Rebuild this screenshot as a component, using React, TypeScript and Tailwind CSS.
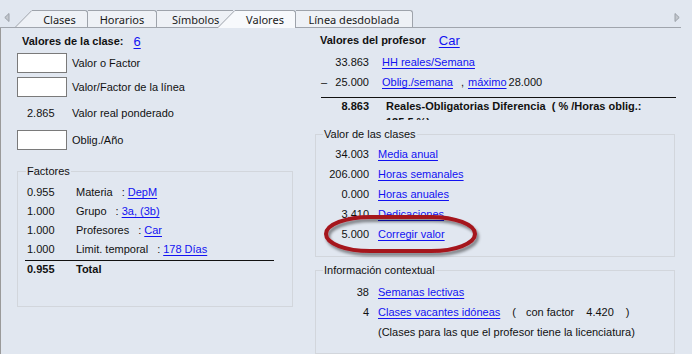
import React from 'react'

const link = 'text-[#1212f2] underline decoration-1 underline-offset-[2px]'

function Box() {
  return <div className="h-[20px] w-[50px] shrink-0 border border-[#7a7a7a] bg-white" />
}

function Slant({ fill, active }: { fill: string; active?: boolean }) {
  return (
    <svg
      width="17"
      height={active ? 18 : 17}
      viewBox={active ? '0 0 17 18' : '0 0 17 17'}
      className={active ? 'relative z-10 -mb-px -ml-[15px] block shrink-0' : 'block shrink-0'}
    >
      <path d={active ? 'M0 18 L17 0 L17 18 Z' : 'M0 17 L17 0 L17 17 Z'} fill={fill} />
      <path d="M0.5 17 L16.8 0.5" stroke="#9ea3ab" strokeWidth="1" fill="none" />
    </svg>
  )
}

function FactorRow({ value, label, target }: { value: string; label: string; target: string }) {
  return (
    <div className="flex h-[19px] items-center">
      <span className="w-[49px]">{value}</span>
      <span>{label}</span>
      <span className="ml-[9px]">:</span>
      <span className={`ml-[3px] ${link}`}>{target}</span>
    </div>
  )
}

function ValueRow({ value, children }: { value: string; children: React.ReactNode }) {
  return (
    <div className="flex h-[20px] items-center">
      <span className="w-[53px] text-right">{value}</span>
      <span className="ml-[9px] flex items-center whitespace-pre">{children}</span>
    </div>
  )
}

export default function App() {
  return (
    <div className="relative h-[354px] w-[692px] overflow-hidden bg-[#e1e7f0] font-['Liberation_Sans',Arial,sans-serif] text-[11px] leading-[13px] text-[#111]">
      {/* tab strip */}
      <div className="flex h-[28px] w-[681px] items-end border-b border-[#a0a5ad] font-['Noto_Sans',sans-serif] text-[11px] text-[#1a1a1a]">
        <svg width="6" height="9" viewBox="0 0 6 9" className="mb-[6px] ml-[4px] self-start mt-[13px] block shrink-0">
          <path d="M5 0.5 L0.8 4.5 L5 8.5 Z" fill="#c3c7cd" stroke="#9aa0a8" strokeWidth="1" />
        </svg>
        <div className="ml-[5px] flex items-end">
          <Slant fill="#eef1f6" />
          <div className="flex h-[17px] w-[56px] items-center justify-center rounded-tr-[3px] border-t border-r border-[#9ea3ab] bg-[#eef1f6]">
            Clases
          </div>
          <div className="flex h-[17px] w-[69px] items-center justify-center rounded-tr-[3px] border-t border-r border-[#9ea3ab] bg-[#eef1f6]">
            Horarios
          </div>
          <div className="flex h-[17px] w-[76px] items-center justify-start pl-[15px] border-t border-[#9ea3ab] bg-[#eef1f6]">
            Símbolos
          </div>
          <Slant fill="#f7f9fc" active />
          <div className="relative z-10 -mb-px flex h-[18px] w-[61px] items-center justify-center pb-px rounded-tr-[3px] border-t border-r border-[#9ea3ab] bg-[#f7f9fc]">
            Valores
          </div>
          <div className="flex h-[17px] w-[117px] items-center justify-center rounded-tr-[3px] border-t border-r border-[#9ea3ab] bg-[#eef1f6]">
            Línea desdoblada
          </div>
        </div>
        <svg width="6" height="9" viewBox="0 0 6 9" className="ml-auto mr-[1px] self-start mt-[13px] block shrink-0">
          <path d="M1 0.5 L5.2 4.5 L1 8.5 Z" fill="#c3c7cd" stroke="#9aa0a8" strokeWidth="1" />
        </svg>
      </div>

      {/* body */}
      <div className="flex h-[326px] border-l border-[#9a9a9a]">
        {/* left column */}
        <div className="ml-[16px] flex w-[276px] flex-col">
          <div className="mt-[4px] flex h-[18px] items-center pl-[5px]">
            <span className="font-bold">Valores de la clase:</span>
            <span className={`ml-[10px] text-[13px] ${link}`}>6</span>
          </div>
          <div className="mt-[3px] flex items-center">
            <Box />
            <span className="ml-[5px]">Valor o Factor</span>
          </div>
          <div className="mt-[4px] flex items-center">
            <Box />
            <span className="ml-[5px]">Valor/Factor de la línea</span>
          </div>
          <div className="mt-[7px] flex h-[19px] items-center">
            <span className="w-[55px] pl-[10px]">2.865</span>
            <span>Valor real ponderado</span>
          </div>
          <div className="mt-[7px] flex items-center">
            <Box />
            <span className="ml-[5px]">Oblig./Año</span>
          </div>
          <fieldset className="m-0 mt-[15px] h-[142px] border border-[#d2d6dc] p-0 pl-[9px]">
            <legend className="ml-[-1px] px-[1px]">Factores</legend>
            <div className="mt-[5px] flex flex-col">
              <FactorRow value="0.955" label="Materia" target="DepM" />
              <FactorRow value="1.000" label="Grupo" target="3a, (3b)" />
              <FactorRow value="1.000" label="Profesores" target="Car" />
              <FactorRow value="1.000" label="Limit. temporal" target="178 Días" />
              <div className="ml-[-2px] mt-[1px] w-[249px] border-t border-[#111]" />
              <div className="flex h-[17px] items-center font-bold">
                <span className="w-[49px]">0.955</span>
                <span>Total</span>
              </div>
            </div>
          </fieldset>
        </div>

        {/* right column */}
        <div className="ml-[22px] flex w-[360px] flex-col">
          <div className="mt-[4px] flex h-[18px] items-center pl-[5px]">
            <span className="font-bold">Valores del profesor</span>
            <span className={`ml-[13px] text-[13px] ${link}`}>Car</span>
          </div>
          <div className="mt-[3px] flex h-[20px] items-center">
            <span className="w-[54px] text-right">33.863</span>
            <span className={`ml-[13px] ${link}`}>HH reales/Semana</span>
          </div>
          <div className="flex h-[20px] items-center">
            <span className="flex w-[54px] justify-between pl-[6px]">
              <span>–</span>
              <span>25.000</span>
            </span>
            <span className={`ml-[13px] ${link}`}>Oblig./semana</span>
            <span className="ml-[8px]">,</span>
            <span className={`ml-[4px] ${link}`}>máximo</span>
            <span className="ml-[2px]">28.000</span>
          </div>
          <div className="ml-[6px] mt-[4px] w-[355px] border-t border-[#111]" />
          <div className="flex h-[22px] items-start overflow-hidden font-bold leading-[16px]">
            <span className="w-[54px] text-right">8.863</span>
            <span className="ml-[17px] whitespace-pre">
              Reales-Obligatorias Diferencia  ( % /Horas oblig.:
              <br />
              135.5 %)
            </span>
          </div>

          <fieldset className="m-0 mt-[8px] h-[130px] border border-[#d2d6dc] p-0">
            <legend className="ml-[7px] px-[1px]">Valor de las clases</legend>
            <div className="mt-[4px] flex flex-col">
              <ValueRow value="34.003">
                <span className={link}>Media anual</span>
              </ValueRow>
              <ValueRow value="206.000">
                <span className={link}>Horas semanales</span>
              </ValueRow>
              <ValueRow value="0.000">
                <span className={link}>Horas anuales</span>
              </ValueRow>
              <ValueRow value="3.410">
                <span className={link}>Dedicaciones</span>
              </ValueRow>
              <ValueRow value="5.000">
                <span className={link}>Corregir valor</span>
              </ValueRow>
            </div>
          </fieldset>

          <fieldset className="m-0 mt-[7px] h-[90px] border border-[#d2d6dc] p-0">
            <legend className="ml-[7px] px-[1px]">Información contextual</legend>
            <div className="mt-[5px] flex flex-col">
              <ValueRow value="38">
                <span className={link}>Semanas lectivas</span>
              </ValueRow>
              <ValueRow value="4">
                <span className={link}>Clases vacantes idóneas</span>
                <span className="ml-[12px]">(</span>
                <span className="ml-[10px]">con factor</span>
                <span className="ml-[12px]">4.420</span>
                <span className="ml-[12px]">)</span>
              </ValueRow>
              <ValueRow value="">
                <span>(Clases para las que el profesor tiene la licenciatura)</span>
              </ValueRow>
            </div>
          </fieldset>
        </div>
      </div>

      {/* red highlight */}
      <svg width="170" height="52" viewBox="0 0 170 52" className="pointer-events-none absolute left-[318px] top-[208px]">
        <defs>
          <filter id="sh" x="-10%" y="-20%" width="130%" height="160%">
            <feDropShadow dx="2" dy="3" stdDeviation="1.6" floodColor="#000" floodOpacity="0.45" />
          </filter>
        </defs>
        <rect x="8" y="9" width="149" height="34" rx="44" ry="17" fill="none" stroke="#a5141d" strokeWidth="4" filter="url(#sh)" />
      </svg>
    </div>
  )
}
